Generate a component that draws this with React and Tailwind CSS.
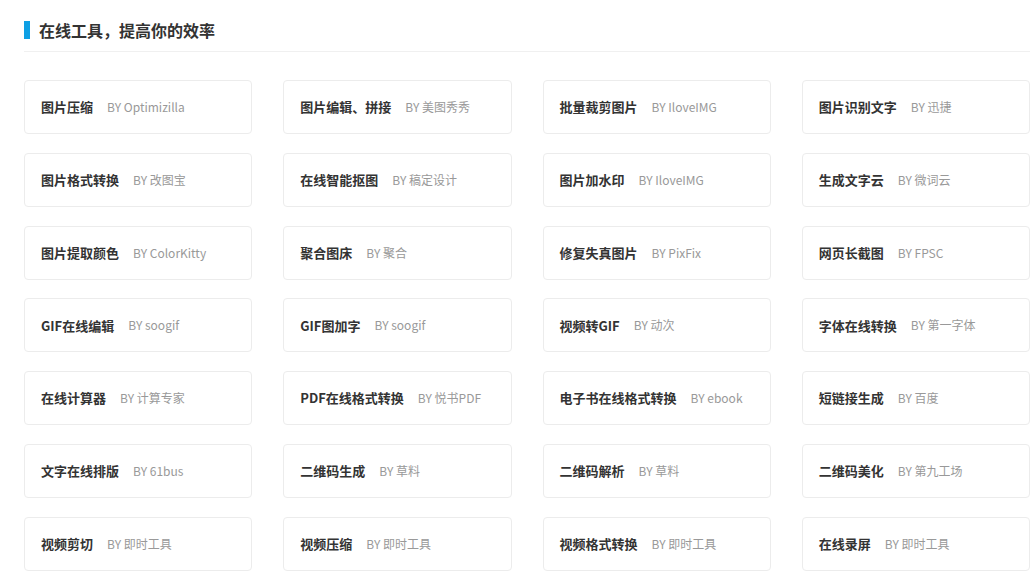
import React from 'react';

const tools = [
  ['图片压缩', 'Optimizilla'],
  ['图片编辑、拼接', '美图秀秀'],
  ['批量裁剪图片', 'IloveIMG'],
  ['图片识别文字', '迅捷'],
  ['图片格式转换', '改图宝'],
  ['在线智能抠图', '稿定设计'],
  ['图片加水印', 'IloveIMG'],
  ['生成文字云', '微词云'],
  ['图片提取颜色', 'ColorKitty'],
  ['聚合图床', '聚合'],
  ['修复失真图片', 'PixFix'],
  ['网页长截图', 'FPSC'],
  ['GIF在线编辑', 'soogif'],
  ['GIF图加字', 'soogif'],
  ['视频转GIF', '动次'],
  ['字体在线转换', '第一字体'],
  ['在线计算器', '计算专家'],
  ['PDF在线格式转换', '悦书PDF'],
  ['电子书在线格式转换', 'ebook'],
  ['短链接生成', '百度'],
  ['文字在线排版', '61bus'],
  ['二维码生成', '草料'],
  ['二维码解析', '草料'],
  ['二维码美化', '第九工场'],
  ['视频剪切', '即时工具'],
  ['视频压缩', '即时工具'],
  ['视频格式转换', '即时工具'],
  ['在线录屏', '即时工具'],
];

const ToolCard = ({ name, by }) => (
  <div className="flex h-[54px] items-center rounded-[4px] border border-[#ececec] bg-white pl-[16px]">
    <span className="text-[13px] font-bold text-[#333]">{name}</span>
    <span className="ml-[14px] text-[12px] text-[#999]">BY {by}</span>
  </div>
);

export default function App() {
  return (
    <div
      className="min-h-[576px] bg-white pl-[24px] pr-[5px] pt-[19px]"
      style={{ fontFamily: '"Noto Sans CJK SC", "Open Sans", sans-serif' }}
    >
      <div className="flex items-center border-b border-[#f0f0f0] pb-[10px]">
        <span className="h-[18px] w-[6px] bg-[#0ea0e4]" />
        <h2 className="ml-[9px] text-[16px] font-bold leading-[22px] text-[#333]">在线工具，提高你的效率</h2>
      </div>
      <div className="mt-[28px] grid grid-cols-4 gap-x-[31px] gap-y-[18.8px]">
        {tools.map(([name, by]) => (
          <ToolCard key={name} name={name} by={by} />
        ))}
      </div>
    </div>
  );
}
